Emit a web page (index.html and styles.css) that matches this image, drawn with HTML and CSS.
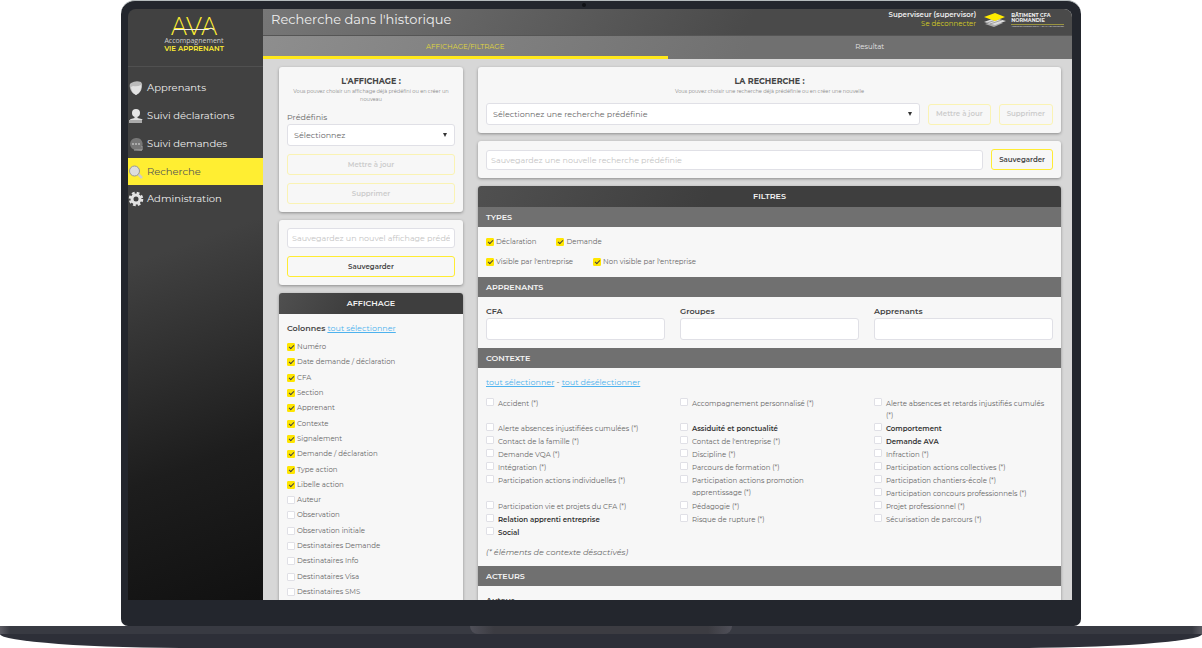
FILE: index.html
```html
<!DOCTYPE html>
<html lang="fr">
<head>
    <meta charset="UTF-8">
    <meta name="viewport" content="width=device-width, initial-scale=1.0">
    <title>AVA - Recherche dans l'historique</title>
    <link rel="stylesheet" href="styles.css">
</head>
<body>
    <div class="laptop">
        <span class="camera"></span>
        <div class="screen">
            <aside class="sidebar">
                <div class="logo">
                    <svg width="60" height="23" viewBox="0 0 60 23">
                        <text class="logo-mark" x="30" y="21" text-anchor="middle">AVA</text>
                        <path d="M10 15.500h34l3-1.500 3 2" fill="none" stroke="#eee" stroke-width="1"/>
                    </svg>
                    <span class="logo-top">Accompagnement</span>
                    <span class="logo-bottom">VIE APPRENANT</span>
                </div>
                <nav class="menu">
                    <a href="#">
                        <svg width="16" height="16" viewBox="0 0 16 16"><path d="M3 3Q8 0 13 2q2 2 1 5-1 6-6 8Q3 13 2 8 1 4 3 3z" fill="#bbb"/><path d="M5 6q4 1 8-1 1 7-5 10-5-3-5-8z" fill="#e2e2e2"/></svg>
                        Apprenants
                    </a>
                    <a href="#">
                        <svg width="16" height="16" viewBox="0 0 16 16"><circle cx="8" cy="5" r="4" fill="#e6e6e6"/><path d="M6.500 8h3v2l4 1q1 0 1 1H2q0-1 1-1l3.500-1z" fill="#ddd"/><path d="M1 12h13v3H1z" fill="#aaa"/></svg>
                        Suivi déclarations
                    </a>
                    <a href="#">
                        <svg width="16" height="16" viewBox="0 0 16 16"><path d="M8 2a6 6 0 1 0 0 12l6 1-1-3a6 6 0 0 0-5-10z" fill="#777"/><path d="M6 14h8v-4" fill="none" stroke="#aaa"/><g fill="#eee"><circle cx="5" cy="8" r=".8"/><circle cx="8" cy="8" r=".8"/><circle cx="11" cy="8" r=".8"/></g></svg>
                        Suivi demandes
                    </a>
                    <a href="#" class="current">
                        <svg width="16" height="16" viewBox="0 0 16 16"><path d="M10 10l4 4" stroke="#ccc" stroke-width="2.5"/><circle cx="6.500" cy="7" r="5" fill="#ddd" stroke="#999"/></svg>
                        Recherche
                    </a>
                    <a href="#">
                        <svg width="16" height="16" viewBox="0 0 16 16"><circle cx="8" cy="8" r="4" fill="none" stroke="#e2e2e2" stroke-width="3"/><circle cx="8" cy="8" r="6" fill="none" stroke="#e2e2e2" stroke-width="2.600" stroke-dasharray="2.700 2.010"/></svg>
                        Administration
                    </a>
                </nav>
            </aside>

            <div class="page">
                <header class="header">
                    <h1>Recherche dans l'historique</h1>
                    <div class="user">
                        <strong>Superviseur (supervisor)</strong>
                        <a href="#">Se déconnecter</a>
                    </div>
                    <div class="partner">
                        <svg width="22" height="14" viewBox="0 0 22 14">
                            <path d="M1 11l9-3 9 2-9 4z" fill="#aaa"/>
                            <path d="M0 9l11-4 11 3-11 4z" fill="#ddd"/>
                            <path d="M3 10l12-4M6 11l12-4" stroke="#666" stroke-width=".5"/>
                            <path d="M0 4l11-4 10 4-10 4z" fill="#ffeb00"/>
                        </svg>
                        <div class="partner-name">
                            <b>BÂTIMENT CFA<br>NORMANDIE</b>
                            <small>Association régionale des CFA du BTP de Normandie</small>
                        </div>
                    </div>
                </header>

                <nav class="tabs">
                    <a href="#" class="active">AFFICHAGE/FILTRAGE</a>
                    <a href="#">Resultat</a>
                </nav>

                <main class="content">
                    <!-- Affichage -->
                    <div class="column">
                        <section class="card stack">
                            <div class="card-title">
                                <h2>L'AFFICHAGE :</h2>
                                <p>Vous pouvez choisir un affichage déjà prédéfini ou en créer un nouveau</p>
                            </div>
                            <div class="field">
                                <label for="predefinis">Prédéfinis</label>
                                <span class="select">
                                    <select id="predefinis"><option>Sélectionnez</option></select>
                                </span>
                            </div>
                            <button class="btn" disabled>Mettre à jour</button>
                            <button class="btn" disabled>Supprimer</button>
                        </section>

                        <section class="card stack">
                            <input type="text" class="text" aria-label="Nouvel affichage" placeholder="Sauvegardez un nouvel affichage prédéfini">
                            <button class="btn">Sauvegarder</button>
                        </section>

                        <section class="panel">
                            <h2>AFFICHAGE</h2>
                            <div class="colonnes">
                                <p><strong>Colonnes</strong> <a href="#">tout sélectionner</a></p>
                                <div class="list">
                                    <label><input type="checkbox" checked>Numéro</label>
                                    <label><input type="checkbox" checked>Date demande / déclaration</label>
                                    <label><input type="checkbox" checked>CFA</label>
                                    <label><input type="checkbox" checked>Section</label>
                                    <label><input type="checkbox" checked>Apprenant</label>
                                    <label><input type="checkbox" checked>Contexte</label>
                                    <label><input type="checkbox" checked>Signalement</label>
                                    <label><input type="checkbox" checked>Demande / déclaration</label>
                                    <label><input type="checkbox" checked>Type action</label>
                                    <label><input type="checkbox" checked>Libelle action</label>
                                    <label><input type="checkbox">Auteur</label>
                                    <label><input type="checkbox">Observation</label>
                                    <label><input type="checkbox">Observation initiale</label>
                                    <label><input type="checkbox">Destinataires Demande</label>
                                    <label><input type="checkbox">Destinataires Info</label>
                                    <label><input type="checkbox">Destinataires Visa</label>
                                    <label><input type="checkbox">Destinataires SMS</label>
                                </div>
                            </div>
                        </section>
                    </div>

                    <!-- Recherche -->
                    <div class="column">
                        <section class="card">
                            <div class="card-title">
                                <h2>LA RECHERCHE :</h2>
                                <p>Vous pouvez choisir une recherche déjà prédéfinie ou en créer une nouvelle</p>
                            </div>
                            <div class="row">
                                <span class="select">
                                    <select aria-label="Recherche prédéfinie"><option>Sélectionnez une recherche prédéfinie</option></select>
                                </span>
                                <button class="btn" disabled>Mettre à jour</button>
                                <button class="btn" disabled>Supprimer</button>
                            </div>
                        </section>

                        <section class="card row">
                            <input type="text" class="text" aria-label="Nouvelle recherche" placeholder="Sauvegardez une nouvelle recherche prédéfinie">
                            <button class="btn">Sauvegarder</button>
                        </section>

                        <section class="panel">
                            <h2>FILTRES</h2>
                            <h3>TYPES</h3>
                            <div class="types">
                                <div>
                                    <label><input type="checkbox" checked>Déclaration</label>
                                    <label><input type="checkbox" checked>Demande</label>
                                </div>
                                <div>
                                    <label><input type="checkbox" checked>Visible par l'entreprise</label>
                                    <label><input type="checkbox" checked>Non visible par l'entreprise</label>
                                </div>
                            </div>
                            <h3>APPRENANTS</h3>
                            <div class="apprenants">
                                <div><label for="cfa">CFA</label><input type="text" class="text" id="cfa"></div>
                                <div><label for="groupes">Groupes</label><input type="text" class="text" id="groupes"></div>
                                <div><label for="apprenants">Apprenants</label><input type="text" class="text" id="apprenants"></div>
                            </div>
                            <h3>CONTEXTE</h3>
                            <div class="contexte">
                                <p><a href="#">tout sélectionner</a> - <a href="#">tout désélectionner</a></p>
                                <div class="choices">
                                    <label><input type="checkbox">Accident (*)</label>
                                    <label><input type="checkbox">Accompagnement personnalisé (*)</label>
                                    <label><input type="checkbox">Alerte absences et retards injustifiés cumulés (*)</label>
                                    <label><input type="checkbox">Alerte absences injustifiées cumulées (*)</label>
                                    <label class="on"><input type="checkbox">Assiduité et ponctualité</label>
                                    <label class="on"><input type="checkbox">Comportement</label>
                                    <label><input type="checkbox">Contact de la famille (*)</label>
                                    <label><input type="checkbox">Contact de l'entreprise (*)</label>
                                    <label class="on"><input type="checkbox">Demande AVA</label>
                                    <label><input type="checkbox">Demande VQA (*)</label>
                                    <label><input type="checkbox">Discipline (*)</label>
                                    <label><input type="checkbox">Infraction (*)</label>
                                    <label><input type="checkbox">Intégration (*)</label>
                                    <label><input type="checkbox">Parcours de formation (*)</label>
                                    <label><input type="checkbox">Participation actions collectives (*)</label>
                                    <label><input type="checkbox">Participation actions individuelles (*)</label>
                                    <label><input type="checkbox">Participation actions promotion apprentissage (*)</label>
                                    <label><input type="checkbox">Participation chantiers-école (*)</label>
                                    <label><input type="checkbox">Participation concours professionnels (*)</label>
                                    <label><input type="checkbox">Participation vie et projets du CFA (*)</label>
                                    <label><input type="checkbox">Pédagogie (*)</label>
                                    <label><input type="checkbox">Projet professionnel (*)</label>
                                    <label class="on"><input type="checkbox">Relation apprenti entreprise</label>
                                    <label><input type="checkbox">Risque de rupture (*)</label>
                                    <label><input type="checkbox">Sécurisation de parcours (*)</label>
                                    <label class="on"><input type="checkbox">Social</label>
                                </div>
                                <p><em>(* éléments de contexte désactivés)</em></p>
                            </div>
                            <h3>ACTEURS</h3>
                            <div class="apprenants">
                                <div><label for="auteur">Auteur</label><input type="text" class="text" id="auteur"></div>
                            </div>
                        </section>
                    </div>
                </main>
            </div>
        </div>
    </div>
    <div class="base">
        <div class="base-top"><span class="notch"></span></div>
        <div class="base-bottom"></div>
    </div>
</body>
</html>
```
FILE: styles.css
```css
* {
    box-sizing: border-box;
}

body {
    display: flex;
    flex-direction: column;
    height: 100vh;
    margin: 0;
    overflow: hidden;
    background: #fff;
    color: #666;
    font-family: Montserrat, Inter, sans-serif;
    font-size: 8px;
    line-height: 12px;
}

h1, h2, h3, p {
    margin: 0;
}

a {
    color: #4db2ee;
}

/* Laptop */
.laptop {
    position: relative;
    flex: 1;
    display: flex;
    min-height: 0;
    margin: 0 121px;
    padding: 8px 9px 26px 7px;
    background: #23262d;
    border-top: 1px solid #b5bbbd;
    border-radius: 14px 14px 7px 7px;
}

.camera {
    position: absolute;
    top: 2px;
    left: 48%;
    width: 4px;
    height: 4px;
    border-radius: 50%;
    background: #101216;
}

.screen {
    flex: 1;
    display: grid;
    grid-template-columns: 135px 1fr;
    overflow: hidden;
    border-radius: 8px 8px 0 0;
}

.base-top {
    display: flex;
    justify-content: center;
    height: 8px;
    background: linear-gradient(90deg, #5c5c64, #383a42 10px, #383a42 calc(100% - 10px), #5c5c64);
}

.notch {
    width: 262px;
    border-radius: 0 0 8px 8px;
    background: linear-gradient(90deg, #505059, #3c3c42 24px, #3c3c42 calc(100% - 24px), #505059);
}

.base-bottom {
    height: 14px;
    background: #2d2f38;
    border-radius: 0 0 200px 200px / 0 0 14px 14px;
}

/* Sidebar */
.sidebar {
    background: linear-gradient(160deg, #414141 40%, #1d1d1d 75%, #111);
}

.logo {
    display: flex;
    flex-direction: column;
    align-items: center;
    height: 58px;
    padding: 5px 3px 0 0;
    border-bottom: 1px solid #505050;
    font-size: 7px;
    line-height: 8px;
    color: #ccc;
}

.logo svg {
    overflow: visible;
}

.logo-mark {
    font-family: Lato, sans-serif;
    font-size: 25px;
    font-weight: 300;
    fill: #ffee32;
}

.logo-top {
    font-family: "Open Sans", sans-serif;
}

.logo-bottom {
    font-weight: 600;
    color: #ffee32;
}

.menu {
    padding-top: 7px;
}

.menu a {
    display: flex;
    align-items: center;
    gap: 3px;
    height: 28px;
    color: #eee;
    font-size: 10px;
    text-decoration: none;
}

.menu .current {
    height: 27px;
    background: #ffee32;
    color: #555;
}

/* Header */
.page {
    min-width: 0;
    overflow: hidden;
    background: #d7d7d7;
}

.header {
    display: flex;
    align-items: flex-start;
    height: 27px;
    padding: 0 8px;
    background: linear-gradient(120deg, #777, #4a4a4a 60%);
    border-bottom: 1px solid #555;
    color: #eee;
}

.header h1 {
    flex: 1;
    font-size: 13px;
    font-weight: 400;
    line-height: 21px;
}

.user {
    display: flex;
    flex-direction: column;
    margin-right: 8px;
    padding-top: 1px;
    text-align: right;
    font-size: 7px;
    line-height: 9px;
}

.user strong {
    font-weight: 600;
}

.user a {
    color: #d8d022;
    text-decoration: none;
}

.partner {
    display: flex;
    gap: 5px;
    padding-top: 4px;
}

.partner-name {
    font-size: 5px;
    line-height: 5px;
}

.partner-name small {
    display: block;
    margin-top: 1px;
    border-top: 1px solid #9a9340;
    font-size: 2px;
    line-height: 3px;
}

.tabs {
    display: flex;
    height: 23px;
    background: linear-gradient(120deg, #8e8e8e, #707070 60%);
}

.tabs a {
    flex: 1;
    border-bottom: 3px solid transparent;
    color: #e6e6e6;
    font-size: 7px;
    line-height: 22px;
    text-align: center;
    text-decoration: none;
}

.tabs .active {
    border-color: #ffe81a;
    color: #e0d93a;
}

/* Content */
.content {
    display: grid;
    grid-template-columns: 184fr 583fr;
    align-items: start;
    gap: 15px;
    padding: 8px 11px 0 16px;
}

.column {
    display: flex;
    flex-direction: column;
    gap: 8px;
    min-width: 0;
}

.card, .panel {
    background: #f7f7f7;
    border-radius: 3px;
    box-shadow: 0 1px 3px rgba(0, 0, 0, 0.35);
}

.card {
    padding: 8px;
}

.stack {
    display: flex;
    flex-direction: column;
    gap: 8px;
}

.row {
    display: flex;
    align-items: center;
    gap: 8px;
}

.card-title {
    text-align: center;
    font-size: 5px;
    line-height: 8px;
    color: #8a8a8a;
}

.card-title h2 {
    font-size: 8px;
    line-height: 12px;
    color: #444;
}

.card .row {
    margin-top: 8px;
}

.field label {
    display: block;
    line-height: 13px;
}

.select {
    position: relative;
    display: flex;
    flex: 1;
}

.select::after {
    content: "";
    position: absolute;
    top: 9px;
    right: 8px;
    border: 2px solid transparent;
    border-top: 4px solid #333;
    border-bottom: 0;
}

select, .text {
    width: 100%;
    min-width: 0;
    height: 22px;
    padding: 0 6px;
    appearance: none;
    border: 1px solid #e0e0e6;
    border-radius: 3px;
    background: #fff;
    color: #666;
    font: inherit;
}

.text {
    height: 20px;
    padding: 0 4px;
}

.text::placeholder {
    color: #c4c4c4;
}

.btn {
    height: 21px;
    padding: 0 7px;
    border: 1px solid #ffec33;
    border-radius: 3px;
    background: transparent;
    color: #444;
    font: inherit;
    font-size: 7px;
    font-weight: 600;
    white-space: nowrap;
}

.btn:disabled {
    border-color: #faf3b4;
    color: #ccc;
}

.panel h2, .panel h3 {
    padding: 0 8px;
    color: #f4f4f4;
    font-size: 8px;
    font-weight: 600;
    line-height: 21px;
}

.panel h2 {
    border-radius: 3px 3px 0 0;
    background: linear-gradient(120deg, #505050, #3e3e3e 40%);
    text-align: center;
}

.panel h3 {
    background: #707070;
    line-height: 20px;
}

.panel strong {
    color: #444;
    font-weight: 600;
}

/* Checkboxes */
input[type="checkbox"] {
    flex: none;
    width: 8px;
    height: 8px;
    margin: 0;
    appearance: none;
    border: 1px solid #e0e0e6;
    border-radius: 1px;
    background: #fff;
}

input[type="checkbox"]:checked {
    display: grid;
    align-items: start;
    justify-items: center;
    border-color: #ffe600;
    background: #ffe600;
}

input[type="checkbox"]:checked::before {
    content: "";
    width: 4px;
    height: 2px;
    margin-top: 1px;
    border: solid #444;
    border-width: 0 0 1px 1px;
    transform: rotate(-45deg);
}

.colonnes {
    padding: 8px;
}

.list {
    display: flex;
    flex-direction: column;
    justify-content: space-between;
    height: 257px;
    margin-top: 7px;
}

.list label, .types label {
    display: flex;
    align-items: center;
    gap: 2px;
    font-size: 7px;
}

.types {
    display: flex;
    flex-direction: column;
    gap: 8px;
    padding: 9px 8px;
}

.types div {
    display: flex;
    gap: 20px;
}

.types label {
    line-height: 12px;
}

.apprenants {
    display: grid;
    grid-template-columns: repeat(3, 1fr);
    gap: 15px;
    padding: 8px;
}

.apprenants label {
    display: block;
    line-height: 13px;
    color: #444;
    font-weight: 600;
}

.apprenants .text {
    height: 22px;
}

.contexte {
    padding: 8px;
}

.choices {
    display: flow-root;
    margin: 10px -15px 6px 0;
}

/* les libellés longs décalent les suivants */
.choices label {
    display: flex;
    float: left;
    gap: 4px;
    width: 33.33%;
    padding: 0 22px 1px 0;
    font-size: 7px;
}

.choices .on {
    color: #333;
    font-weight: 600;
}
```
